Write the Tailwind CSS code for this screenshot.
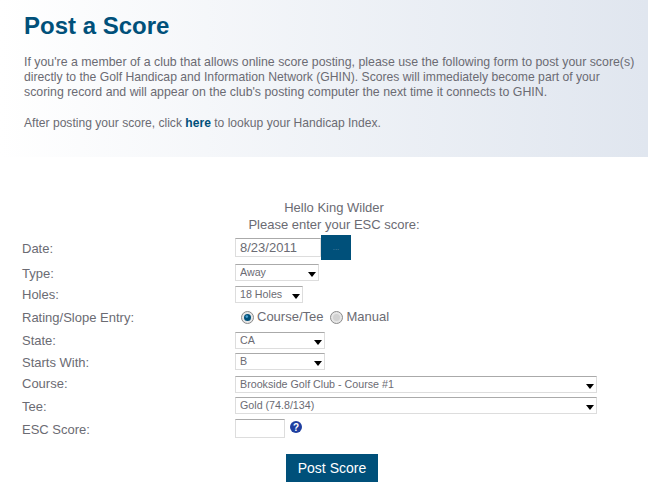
<!DOCTYPE html>
<html lang="en">
<head>
    <meta charset="UTF-8">
    <meta name="viewport" content="width=device-width, initial-scale=1.0">
    <title>Post a Score</title>
    <script src="https://cdn.jsdelivr.net/npm/@tailwindcss/browser@4"></script>
</head>
<body class="bg-white font-['Liberation_Sans',Arial,sans-serif] text-[#6b6b73] overflow-hidden">
    <div class="h-[157px] px-6 pt-[12px] bg-gradient-to-r from-white to-[#e0e6ef]">
        <h1 class="text-[24px] leading-[28px] font-bold text-[#00507a]">Post a Score</h1>
        <p class="mt-[15px] text-[12.35px] leading-[15px] whitespace-nowrap">If you're a member of a club that allows online score posting, please use the following form to post your score(s)<br><span class="text-[12.18px]">directly to the Golf Handicap and Information Network (GHIN). Scores will immediately become part of your</span><br>scoring record and will appear on the club's posting computer the next time it connects to GHIN.</p>
        <p class="mt-[16px] text-[12.1px] leading-[15px]">After posting your score, click <a href="#" class="font-bold text-[#00507a]">here</a> to lookup your Handicap Index.</p>
    </div>

    <form class="text-[13px]" onsubmit="return false">
        <div class="pt-[42px] pb-[2px] pl-[20px] text-center leading-[17px]">
            <p>Hello King Wilder</p>
            <p>Please enter your ESC score:</p>
        </div>

        <div class="pl-[22px] grid grid-cols-[213px_1fr] items-center">
            <label class="h-[25px] pt-px leading-[25px]">Date:</label>
            <div class="flex items-center h-[25px]">
                <input type="text" value="8/23/2011" class="w-[86px] h-[19px] px-1 border border-[#ddd] border-t-[#aaa] text-[#6b6b73] outline-none">
                <button type="button" class="w-[30px] h-[25px] bg-[#00507a] text-[#5d8ba3] text-[8px] leading-none">...</button>
            </div>

            <label class="h-[25px] pt-px leading-[25px]">Type:</label>
            <div class="h-[25px] flex items-center">
                <div class="relative w-[84px] h-[17px]">
                    <select class="block appearance-none w-full h-full pl-[4px] border border-[#ddd] border-t-[#aaa] rounded-none text-[10.7px] leading-none bg-white outline-none"><option>Away</option></select>
                    <svg class="absolute right-[3px] top-[8px] w-[8px] h-[5px] pointer-events-none" viewBox="0 0 8 5"><path d="M0 0h8L4 5z" fill="#000"/></svg>
                </div>
            </div>

            <label class="h-[18px] pt-px leading-[18px]">Holes:</label>
            <div class="h-[18px] flex items-center">
                <div class="relative w-[68px] h-[17px]">
                    <select class="block appearance-none w-full h-full pl-[4px] border border-[#ddd] border-t-[#aaa] rounded-none text-[10.7px] leading-none bg-white outline-none"><option>18 Holes</option></select>
                    <svg class="absolute right-[3px] top-[8px] w-[8px] h-[5px] pointer-events-none" viewBox="0 0 8 5"><path d="M0 0h8L4 5z" fill="#000"/></svg>
                </div>
            </div>

            <label class="h-[28px] pt-px leading-[28px]">Rating/Slope Entry:</label>
            <div class="h-[28px] flex items-center pl-[6px] gap-[3px]">
                <svg class="w-[13px] h-[13px]" viewBox="0 0 13 13"><circle cx="6.5" cy="6.5" r="6" fill="#e6e6e6" stroke="#8a8a8a"/><circle cx="6.5" cy="6.5" r="3.5" fill="#00507a"/><circle cx="5.8" cy="5.6" r="1.3" fill="#4aa0d0"/></svg>
                <span>Course/Tee</span>
                <svg class="ml-[4px] w-[13px] h-[13px]" viewBox="0 0 13 13"><circle cx="6.5" cy="6.5" r="6" fill="#e6e6e6" stroke="#8a8a8a"/><circle cx="6.5" cy="6.5" r="3.5" fill="#d2d2d2"/></svg>
                <span>Manual</span>
            </div>

            <label class="h-[19px] leading-[19px]">State:</label>
            <div class="h-[19px] flex items-center">
                <div class="relative w-[90px] h-[17px]">
                    <select class="block appearance-none w-full h-full pl-[4px] border border-[#ddd] border-t-[#aaa] rounded-none text-[10.7px] leading-none bg-white outline-none"><option>CA</option></select>
                    <svg class="absolute right-[3px] top-[8px] w-[8px] h-[5px] pointer-events-none" viewBox="0 0 8 5"><path d="M0 0h8L4 5z" fill="#000"/></svg>
                </div>
            </div>

            <label class="h-[23px] pt-px leading-[23px]">Starts With:</label>
            <div class="h-[23px] flex items-center">
                <div class="relative w-[90px] h-[17px]">
                    <select class="block appearance-none w-full h-full pl-[4px] border border-[#ddd] border-t-[#aaa] rounded-none text-[10.7px] leading-none bg-white outline-none"><option>B</option></select>
                    <svg class="absolute right-[3px] top-[8px] w-[8px] h-[5px] pointer-events-none" viewBox="0 0 8 5"><path d="M0 0h8L4 5z" fill="#000"/></svg>
                </div>
            </div>

            <label class="h-[22px] leading-[22px]">Course:</label>
            <div class="h-[22px] flex items-center">
                <div class="relative w-[362px] h-[17px]">
                    <select class="block appearance-none w-full h-full pl-[4px] border border-[#ddd] border-t-[#aaa] rounded-none text-[10.7px] leading-none bg-white outline-none"><option>Brookside Golf Club - Course #1</option></select>
                    <svg class="absolute right-[3px] top-[8px] w-[8px] h-[5px] pointer-events-none" viewBox="0 0 8 5"><path d="M0 0h8L4 5z" fill="#000"/></svg>
                </div>
            </div>

            <label class="h-[21px] pt-px leading-[21px]">Tee:</label>
            <div class="h-[21px] flex items-center">
                <div class="relative w-[362px] h-[17px]">
                    <select class="block appearance-none w-full h-full pl-[4px] border border-[#ddd] border-t-[#aaa] rounded-none text-[10.7px] leading-none bg-white outline-none"><option>Gold (74.8/134)</option></select>
                    <svg class="absolute right-[3px] top-[8px] w-[8px] h-[5px] pointer-events-none" viewBox="0 0 8 5"><path d="M0 0h8L4 5z" fill="#000"/></svg>
                </div>
            </div>

            <label class="h-[25px] pt-px leading-[25px]">ESC Score:</label>
            <div class="h-[25px] flex items-center gap-[5px]">
                <input type="text" class="w-[50px] h-[19px] border border-[#ddd] border-t-[#aaa] outline-none">
                <svg class="w-[12px] h-[12px] -mt-[4px]" viewBox="0 0 12 12">
                    <circle cx="6" cy="6" r="6" fill="#1f3fa0"/>
                    <text x="6" y="9.5" text-anchor="middle" font-size="10" font-weight="bold" fill="#fff">?</text>
                </svg>
            </div>
        </div>

        <div class="mt-[13px] pl-[286px]">
            <button type="submit" class="w-[92px] h-[28px] bg-[#00507a] text-white text-[14px]">Post Score</button>
        </div>
    </form>
</body>
</html>
